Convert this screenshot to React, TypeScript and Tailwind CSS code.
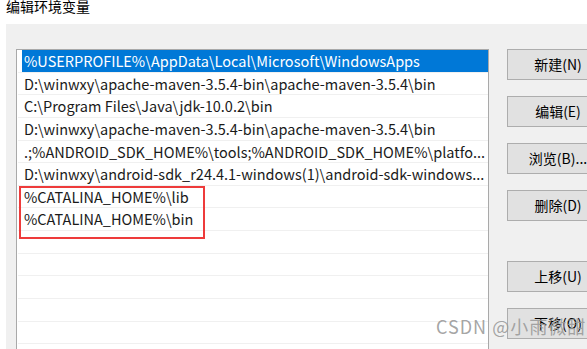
const paths = [
  "%USERPROFILE%\\AppData\\Local\\Microsoft\\WindowsApps",
  "D:\\winwxy\\apache-maven-3.5.4-bin\\apache-maven-3.5.4\\bin",
  "C:\\Program Files\\Java\\jdk-10.0.2\\bin",
  "D:\\winwxy\\apache-maven-3.5.4-bin\\apache-maven-3.5.4\\bin",
  ".;%ANDROID_SDK_HOME%\\tools;%ANDROID_SDK_HOME%\\platfo...",
  "D:\\winwxy\\android-sdk_r24.4.1-windows(1)\\android-sdk-windows...",
  "%CATALINA_HOME%\\lib",
  "%CATALINA_HOME%\\bin",
  "",
  "",
  "",
  "",
  "",
];

const buttons = ["新建(N)", "编辑(E)", "浏览(B)...", "删除(D)"];

function Btn({ label }: { label: string }) {
  return (
    <div className="flex h-[31px] w-[102px] shrink-0 items-center justify-center border border-[#adadad] bg-[#e1e1e1] text-[14px] text-black">
      {label}
    </div>
  );
}

export default function App() {
  return (
    <div
      className="relative h-[349px] w-[587px] overflow-hidden bg-white"
      style={{ fontFamily: '"Noto Sans CJK SC", "Noto Sans", sans-serif' }}
    >
      <div className="-mt-[3px] h-[27px] pl-[6px] text-[14px] leading-[18px] text-black">
        编辑环境变量
      </div>

      <div className="ml-[6px] flex h-full bg-[#f0f0f0] pl-[10px] pt-[25px]">
        <div className="h-[400px] w-[473px] shrink-0 border-l border-t border-r border-[#a9a9a9] bg-white pl-[1px]">
          {paths.map((p, i) => (
            <div
              key={i}
              className="h-[22.65px] border-b border-[#f0f0f0] text-[14.5px] leading-[22px] text-[#1a1a1a]"
            >
              {i === 0 ? (
                <div className="ml-[4px] h-full bg-[#0078d7] pl-[2px] text-white">
                  {p}
                </div>
              ) : (
                <div className="ml-[4px] whitespace-nowrap pl-[2px]">{p}</div>
              )}
            </div>
          ))}
        </div>

        <div className="ml-[18px] flex flex-col gap-[16px]">
          {buttons.map((b) => (
            <Btn key={b} label={b} />
          ))}
          <div className="mt-[24px]">
            <Btn label="上移(U)" />
          </div>
          <Btn label="下移(O)" />
        </div>
      </div>

      {/* red highlight around the two new entries */}
      <div className="absolute left-[19px] top-[186px] h-[53px] w-[186px] border-2 border-[#ee3b3b]" />

      <div className="absolute left-[436px] top-[315px] whitespace-nowrap text-[18px] leading-[22px] tracking-[1px] text-[#9a9a9a]/90">
        CSDN @小雨微甜
      </div>
    </div>
  );
}
